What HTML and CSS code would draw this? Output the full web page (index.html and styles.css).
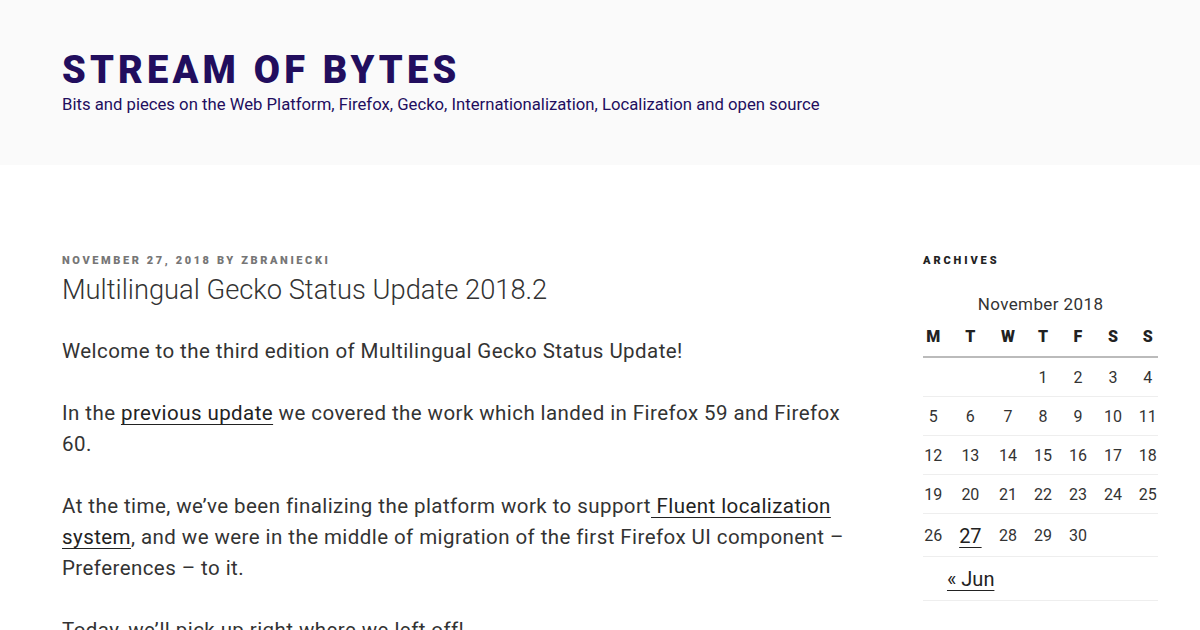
FILE: index.html
```html
<!DOCTYPE html>
<html lang="en">
<head>
<meta charset="utf-8">
<title>Multilingual Gecko Status Update 2018.2 – Stream of Bytes</title>
<link rel="stylesheet" href="styles.css">
</head>
<body>
<header class="site-header">
  <h1 class="site-title"><a href="#">Stream of Bytes</a></h1>
  <p class="site-description">Bits and pieces on the Web Platform, Firefox, Gecko, Internationalization, Localization and open source</p>
</header>
<div class="site-content">
  <main class="content-area">
    <article class="post">
      <div class="entry-meta"><a href="#">November 27, 2018</a> by <a href="#">zbraniecki</a></div>
      <h2 class="entry-title">Multilingual Gecko Status Update 2018.2</h2>
      <div class="entry-content">
        <p>Welcome to the third edition of Multilingual Gecko Status Update!</p>
        <p>In the <a href="#">previous update</a> we covered the work which landed in Firefox 59 and Firefox 60.</p>
        <p>At the time, we’ve been finalizing the platform work to support<a href="#"> Fluent localization system</a>, and we were in the middle of migration of the first Firefox UI component – Preferences – to it.</p>
        <p>Today, we’ll pick up right where we left off!</p>
      </div>
    </article>
  </main>
  <aside class="sidebar">
    <section class="widget">
      <h3 class="widget-title">Archives</h3>
      <table class="calendar">
        <caption>November 2018</caption>
        <thead>
          <tr><th>M</th><th>T</th><th>W</th><th>T</th><th>F</th><th>S</th><th>S</th></tr>
        </thead>
        <tbody>
          <tr><td colspan="3"></td><td>1</td><td>2</td><td>3</td><td>4</td></tr>
          <tr><td>5</td><td>6</td><td>7</td><td>8</td><td>9</td><td>10</td><td>11</td></tr>
          <tr><td>12</td><td>13</td><td>14</td><td>15</td><td>16</td><td>17</td><td>18</td></tr>
          <tr><td>19</td><td>20</td><td>21</td><td>22</td><td>23</td><td>24</td><td>25</td></tr>
          <tr class="last-week"><td>26</td><td><a href="#">27</a></td><td>28</td><td>29</td><td>30</td><td colspan="2"></td></tr>
        </tbody>
        <tfoot>
          <tr><td colspan="3" class="prev"><a href="#">« Jun</a></td><td colspan="4"></td></tr>
        </tfoot>
      </table>
    </section>
  </aside>
</div>
</body>
</html>
```
FILE: styles.css
```css
* { box-sizing: border-box; }

html, body {
  margin: 0;
  padding: 0;
}

body {
  width: 1200px;
  height: 630px;
  overflow: hidden;
  background: #fff;
  color: #333;
  font-family: Roboto, "Liberation Sans", sans-serif;
}

a { color: #222; }

.site-header {
  background: #fafafa;
  height: 165px;
  padding: 47px 62px 0;
}

.site-title {
  margin: 0;
  font-size: 38px;
  line-height: 46px;
  font-weight: 900;
  letter-spacing: 0.11em;
  text-transform: uppercase;
}

.site-title a {
  color: #220e5e;
  text-decoration: none;
}

.site-description {
  margin: 0;
  font-size: 16.7px;
  line-height: 24px;
  color: #220e5e;
}

.site-content {
  display: flex;
  padding: 88px 0 0 62px;
  gap: 61px;
}

.content-area {
  width: 800px;
  flex: none;
}

.entry-meta {
  font-size: 11px;
  line-height: 16px;
  font-weight: 900;
  letter-spacing: 2.6px;
  text-transform: uppercase;
  color: #767676;
}

.entry-meta a {
  color: #767676;
  text-decoration: none;
}

.entry-title {
  margin: 3px 0 0;
  font-size: 27.3px;
  line-height: 36px;
  font-weight: 300;
  color: #333;
}

.entry-content {
  margin-top: 28px;
  font-size: 20.5px;
  line-height: 31px;
  letter-spacing: 0.43px;
  color: #333;
}

.entry-content p {
  margin: 0 0 31px;
}

.entry-content a {
  color: #222;
  text-decoration: underline;
  text-decoration-thickness: 1px;
  text-underline-offset: 4px;
}

.sidebar {
  width: 235px;
  flex: none;
}

.widget-title {
  margin: 0;
  font-size: 11px;
  line-height: 16px;
  font-weight: 900;
  letter-spacing: 2.9px;
  text-transform: uppercase;
  color: #222;
}

.calendar {
  margin-top: 23px;
  border-collapse: separate;
  border-spacing: 0;
  width: 235px;
  font-size: 16px;
  color: #333;
}

.calendar caption {
  height: 24px;
  line-height: 24px;
  font-size: 17px;
  letter-spacing: 0.4px;
  color: #333;
  text-align: center;
}

.calendar th,
.calendar td {
  padding: 0 7px;
  text-align: center;
  vertical-align: middle;
}

.calendar th:first-child,
.calendar td:first-child { padding-left: 0; }

.calendar th:last-child,
.calendar td:last-child { padding-right: 0; }

.calendar th {
  height: 42px;
  font-weight: 900;
  font-size: 16px;
  color: #222;
  border-bottom: 2px solid #bbb;
}

.calendar tbody td {
  height: 39px;
  padding-top: 1px;
  border-bottom: 1px solid #eee;
}

.calendar tbody tr.last-week td {
  height: 43px;
}

.calendar tbody td a {
  font-size: 20px;
  text-decoration: underline;
  text-decoration-thickness: 1px;
  text-underline-offset: 4px;
}

.calendar tfoot td {
  height: 44px;
  border-bottom: 1px solid #eee;
}

.calendar tfoot a {
  font-size: 20px;
  text-decoration: underline;
  text-decoration-thickness: 1px;
  text-underline-offset: 4px;
}
```
